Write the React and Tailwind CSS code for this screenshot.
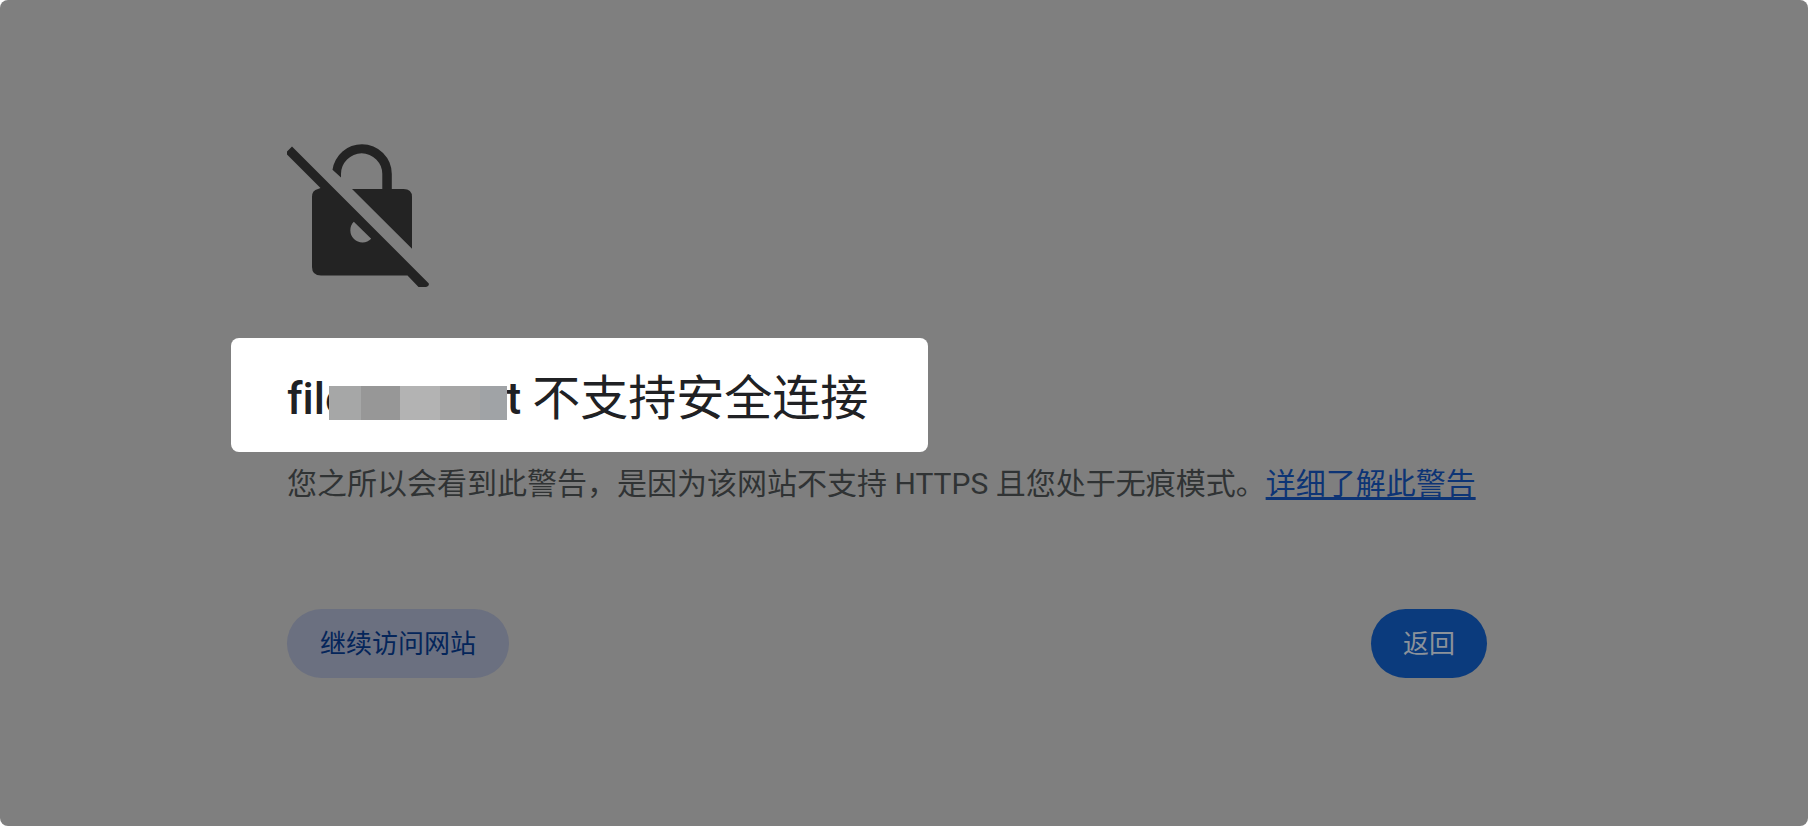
function InsecureLockIcon() {
  return (
    <svg
      viewBox="286 142 144 146"
      className="block h-[146px] w-[144px] -ml-px"
      fill="#232323"
      aria-hidden="true"
    >
      {/* slash and the part of the lock below it */}
      <path d="M292 146.5 L428.6 283.2 Q429.4 284.8 428 286 Q427 287 425.5 287 H418.5 L407.5 275.5 H321 Q312 275.5 312 267 V197 Q312 190 318 189 L320.5 188 L287 154.5 V151.5 Z M353.8 221.8 A10.8 10.8 0 1 0 371.2 238.8 Z" />
      {/* shackle and the body corner above the slash */}
      <path d="M352 189 H382.3 V174 A20.65 20.65 0 0 0 341 174 V177.5 L332.5 169.7 A29.8 29.8 0 0 1 362 144.2 A29.8 29.8 0 0 1 391.8 174 V189 H403.5 Q412 189 412 197 V248.8 Z" />
    </svg>
  );
}

function RedactedText() {
  return (
    <span aria-hidden="true" className="z-10 -ml-5 mt-2 flex h-[34px] w-[178px]">
      <span className="w-8 bg-[#a6a7a7]" />
      <span className="w-[39px] bg-[#979797]" />
      <span className="w-10 bg-[#b3b3b3]" />
      <span className="w-10 bg-[#a6a6a6]" />
      <span className="grow bg-[#a0a3a6]" />
    </span>
  );
}

export default function App() {
  return (
    <div className="bg-white">
      <main className="flex min-h-screen flex-col rounded-lg bg-[#7f7f7f] pb-[148px] pl-[287px] pr-[321px] pt-[142px] font-['Roboto','Noto_Sans_CJK_SC',sans-serif]">
        <InsecureLockIcon />
        <div className="-ml-14 mt-[50px] flex w-[697px] max-w-full self-start rounded-lg bg-white px-14 pb-[17px] pt-[25px]">
          <h1 className="flex h-[72px] items-center whitespace-pre text-[48px] leading-[72px] font-normal text-[#202124] [font-variant-ligatures:none]">
            <span className="text-[44px] font-medium">file</span>
            <RedactedText />
            <span className="text-[44px] font-medium">t </span>
            <span>不支持安全连接</span>
          </h1>
        </div>
        <p className="mt-[9px] text-[30px] leading-[45px] text-[#303334]">
          您之所以会看到此警告，是因为该网站不支持 HTTPS 且您处于无痕模式。
          <a href="#details" className="text-[#0d3475] underline decoration-3 underline-offset-3">
            详细了解此警告
          </a>
        </p>
        <div className="mt-[103px] flex items-center justify-between">
          <button
            type="button"
            className="h-[69px] rounded-full bg-[#6b7080] px-[33px] pt-0.5 text-[26px] text-[#04255a]"
          >
            继续访问网站
          </button>
          <button
            type="button"
            className="h-[69px] rounded-full bg-[#0b3b7d] px-8 pt-0.5 text-[26px] text-[#8c929a]"
          >
            返回
          </button>
        </div>
      </main>
    </div>
  );
}
